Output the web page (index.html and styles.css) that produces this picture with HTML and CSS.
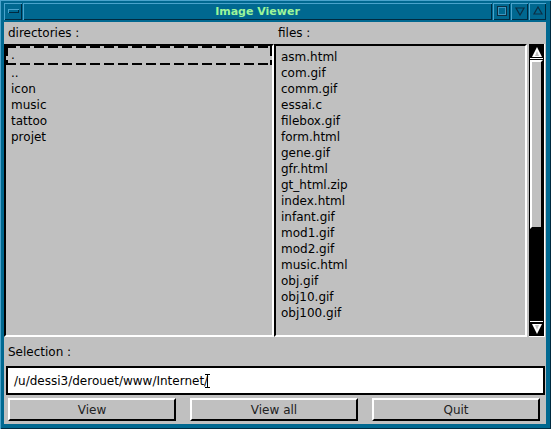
FILE: index.html
```html
<!DOCTYPE html>
<html>
<head>
<meta charset="utf-8">
<link rel="stylesheet" href="styles.css">
</head>
<body>
<div class="win">
  <div class="titlebar">
    <div class="tbtn menu"><span class="bar"></span></div>
    <div class="title">Image Viewer</div>
    <div class="tbtn"><svg width="12" height="12" viewBox="0 0 12 12"><rect x="1.5" y="1.5" width="9" height="9" fill="none" stroke="#0c2f44" stroke-width="1"/><rect x="2.5" y="2.5" width="7" height="7" fill="none" stroke="#3f95bd" stroke-width="1"/></svg></div>
    <div class="tbtn"><svg width="12" height="12" viewBox="0 0 12 12"><polygon points="2,3 10,3 6,10" fill="none" stroke="#0c2f44" stroke-width="1.2"/></svg></div>
    <div class="tbtn"><svg width="12" height="12" viewBox="0 0 12 12"><polygon points="6,2 10,9 2,9" fill="none" stroke="#0c2f44" stroke-width="1.2"/></svg></div>
  </div>
  <div class="client">
    <div class="labels">
      <span class="lbl lbl-dir">directories :</span>
      <span class="lbl lbl-files">files :</span>
    </div>
    <div class="lists">
      <div class="listbox dirs">
        <div class="item focus">.</div>
        <div class="item">..</div>
        <div class="item">icon</div>
        <div class="item">music</div>
        <div class="item">tattoo</div>
        <div class="item">projet</div>
      </div>
      <div class="listbox files">
        <div class="item">asm.html</div>
        <div class="item">com.gif</div>
        <div class="item">comm.gif</div>
        <div class="item">essai.c</div>
        <div class="item">filebox.gif</div>
        <div class="item">form.html</div>
        <div class="item">gene.gif</div>
        <div class="item">gfr.html</div>
        <div class="item">gt_html.zip</div>
        <div class="item">index.html</div>
        <div class="item">infant.gif</div>
        <div class="item">mod1.gif</div>
        <div class="item">mod2.gif</div>
        <div class="item">music.html</div>
        <div class="item">obj.gif</div>
        <div class="item">obj10.gif</div>
        <div class="item">obj100.gif</div>
      </div>
      <div class="scrollbar">
        <div class="arrow"><svg width="12" height="12" viewBox="0 0 12 12"><polygon points="6,1 11,11 1,11" fill="#fff"/><polygon points="6,5 8,10 4,10" fill="#c0c0c0"/></svg></div>
        <div class="thumb"></div>
        <div class="trough"></div>
        <div class="arrow"><svg width="12" height="12" viewBox="0 0 12 12"><polygon points="1,1 11,1 6,11" fill="#fff"/><polygon points="4,2 8,2 6,7" fill="#c0c0c0"/></svg></div>
      </div>
    </div>
    <div class="sel-label">Selection :</div>
    <div class="entry"><span class="entry-text">/u/dessi3/derouet/www/Internet/</span><span class="caret"></span></div>
    <div class="buttons">
      <div class="btn">View</div>
      <div class="btn">View all</div>
      <div class="btn">Quit</div>
    </div>
  </div>
</div>
</body>
</html>
```
FILE: styles.css
```css
* { box-sizing: border-box; }
html, body { margin: 0; padding: 0; }
body {
  width: 551px;
  height: 429px;
  overflow: hidden;
  font-family: "DejaVu Sans", sans-serif;
  font-size: 12px;
  color: #000;
  background: #006890;
}
.win {
  width: 551px;
  height: 429px;
  background: #006890;
  padding: 0 5px 5px 4px;
  display: flex;
  flex-direction: column;
  box-shadow: inset 1px 1px 0 #4aa3cc, inset -1px -1px 0 #002a40;
}
.titlebar {
  height: 22px;
  display: flex;
  align-items: center;
  gap: 1px;
  padding: 2px 0 2px 0;
}
.tbtn {
  width: 17px;
  height: 17px;
  background: #006890;
  display: flex;
  align-items: center;
  justify-content: center;
  box-shadow: inset 1px 1px 0 #4aa3cc, inset -1px -1px 0 #002a40;
}
.tbtn.menu { width: 18px; }
.bar {
  width: 11px;
  height: 4px;
  background: #006890;
  box-shadow: inset 1px 1px 0 #4aa3cc, inset -1px -1px 0 #002a40;
}
.title {
  flex: 1;
  height: 17px;
  text-align: center;
  font-family: "DejaVu Sans", sans-serif;
  font-weight: bold;
  font-size: 11px;
  line-height: 17px;
  color: #9cf59a;
  box-shadow: inset 1px 1px 0 #4aa3cc, inset -1px -1px 0 #002a40;
}
.client {
  flex: 1;
  background: #c0c0c0;
  display: flex;
  flex-direction: column;
}
.labels {
  height: 22px;
  display: flex;
  align-items: center;
}
.lbl { line-height: 22px; }
.lbl-dir { width: 270px; padding-left: 4px; }
.lbl-files { padding-left: 4px; }
.lists {
  height: 293px;
  display: flex;
}
.listbox {
  border-top: 2px solid #000;
  border-left: 2px solid #000;
  border-bottom: 2px solid #fff;
  border-right: 2px solid #fff;
  padding: 2px;
  height: 100%;
}
.dirs { width: 270px; }
.files { width: 253px; margin-right: 2px; padding-left: 5px; }
.item {
  height: 16px;
  line-height: 18px;
  padding-left: 3px;
  white-space: nowrap;
}
.files .item { padding-left: 0; }
.focus {
  position: relative;
  line-height: 15px;
}
.focus::before {
  content: "";
  position: absolute;
  left: -2px; right: -2px; top: -2px; bottom: -1px;
  background:
    repeating-linear-gradient(90deg, #000 0 10px, transparent 10px 14px) top left / 100% 2px no-repeat,
    repeating-linear-gradient(90deg, #000 0 10px, transparent 10px 14px) bottom left / 100% 2px no-repeat,
    repeating-linear-gradient(180deg, #000 0 10px, transparent 10px 14px) top left / 2px 100% no-repeat,
    repeating-linear-gradient(180deg, #000 0 10px, transparent 10px 14px) top right / 2px 100% no-repeat;
}
.scrollbar {
  width: 16px;
  height: 100%;
  background: #000;
  border-right: 1px solid #fff;
  border-bottom: 1px solid #fff;
  padding: 1px 1px 1px 1px;
  display: flex;
  flex-direction: column;
}
.arrow {
  height: 14px;
  display: flex;
  align-items: center;
  justify-content: center;
  border-bottom: 1px solid #fff;
}
.arrow:last-child { border-bottom: 0; border-top: 1px solid #fff; }
.thumb {
  height: 169px;
  margin-top: 1px;
  background: #c0c0c0;
  border-top: 2px solid #fff;
  border-left: 2px solid #fff;
  border-right: 2px solid #000;
  border-bottom: 2px solid #000;
}
.trough { flex: 1; }
.sel-label {
  height: 29px;
  line-height: 31px;
  padding-left: 4px;
}
.entry {
  height: 29px;
  margin: 0 1px 0 2px;
  background: #fff;
  border: 2px solid #000;
  display: flex;
  align-items: center;
  padding-left: 6px;
}
.entry-text { line-height: 16px; }
.caret {
  width: 5px;
  height: 14px;
  margin-left: -3px;
  border-top: 1px solid #000;
  border-bottom: 1px solid #000;
  background: linear-gradient(#000, #000) center / 1px 100% no-repeat;
}
.buttons {
  flex: 1;
  display: flex;
  gap: 14px;
  padding: 3px 2px 3px 4px;
}
.btn {
  width: 168px;
  height: 23px;
  background: #c0c0c0;
  border-top: 2px solid #fff;
  border-left: 2px solid #fff;
  border-right: 2px solid #000;
  border-bottom: 2px solid #000;
  text-align: center;
  line-height: 21px;
  color: #222;
}
```
